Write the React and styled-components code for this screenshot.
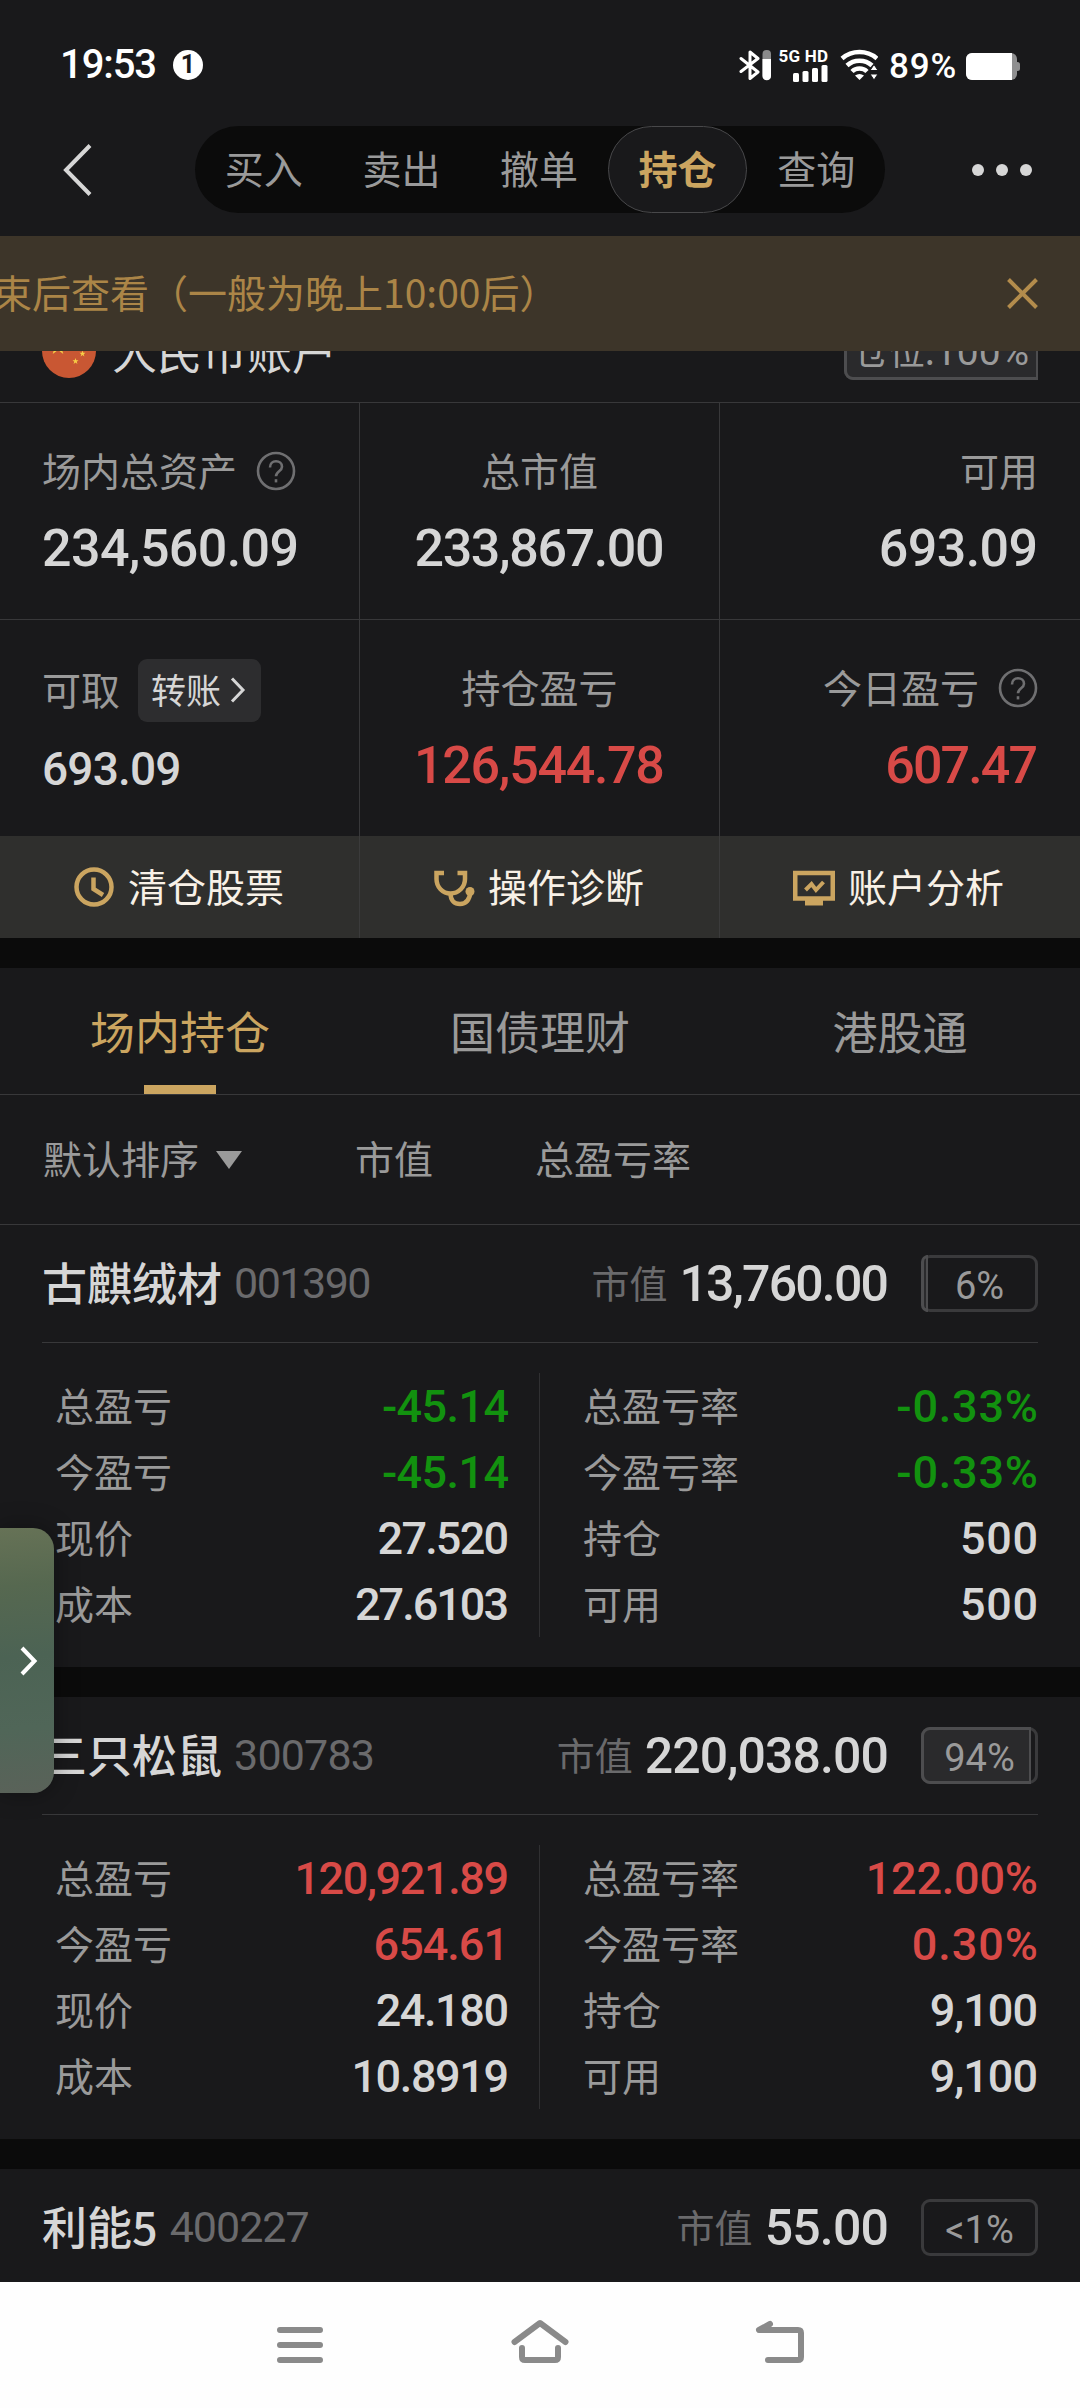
import React from "react";
import styled, { createGlobalStyle } from "styled-components";

const GlobalStyle = createGlobalStyle`
  * {
    box-sizing: border-box;
  }
  body {
    margin: 0;
    background: #19191b;
    font-family: "Noto Sans CJK SC", sans-serif;
    color: #d6d6d6;
  }
`;

const Screen = styled.div`
  width: 1080px;
  height: 2408px;
  display: flex;
  flex-direction: column;
  position: relative;
  overflow: hidden;
  background: #19191b;
`;

const Num = styled.span`
  font-family: Roboto, sans-serif;
  font-size: ${(props) => props.$size || 45}px;
  font-weight: ${(props) => props.$weight || 500};
  line-height: 1;
  letter-spacing: ${(props) => props.$track || 0}px;
  margin-right: ${(props) => -(props.$track || 0)}px;
  color: ${(props) => props.$color || "#d6d6d6"};
  white-space: nowrap;
`;

const Text = styled.span`
  padding-bottom: 4px;
  font-size: ${(props) => props.$size || 39}px;
  font-weight: ${(props) => props.$weight || 400};
  line-height: 1;
  color: ${(props) => props.$color || "#9a9a9a"};
  white-space: nowrap;
`;

const StatusBar = styled.div`
  height: 115px;
  padding: 14px 60px 0 60px;
  display: flex;
  align-items: center;
`;

const Clock = styled(Num)`
  margin-right: 17px;
`;

const NoticeDot = styled.div`
  width: 30px;
  height: 30px;
  border-radius: 50%;
  background: #fff;
  display: flex;
  justify-content: center;
  align-items: center;
`;

const StatusIcons = styled.div`
  margin-left: auto;
  display: flex;
  align-items: center;
`;

const BatteryLevel = styled(Num)`
  margin: 0 9px 0 11px;
  padding-top: 4px;
`;

const Network = styled.div`
  width: 48px;
  height: 34px;
  margin: 0 12px 0 9px;
  display: flex;
  flex-direction: column;
  justify-content: space-between;
  align-items: flex-end;
`;

const TopNav = styled.div`
  height: 121px;
  padding: 0 48px 12px 62px;
  display: flex;
  align-items: center;
  justify-content: space-between;
`;

const Pills = styled.div`
  width: 690px;
  height: 87px;
  margin-left: 14px;
  border-radius: 44px;
  background: #0b0b0b;
  display: flex;
`;

const Pill = styled.div`
  flex: 1;
  height: 87px;
  display: flex;
  justify-content: center;
  align-items: center;
  border-radius: 44px;
  ${(props) =>
    props.$active && `background: #19191b; border: 1px solid #48484a;`}
`;

const Notice = styled.div`
  height: 115px;
  padding: 0 42px 0 0;
  display: flex;
  align-items: center;
  justify-content: space-between;
  background: #3d3529;
`;

const NoticeText = styled(Text)`
  margin-left: -7px;
`;

const AccountClip = styled.div`
  height: 52px;
  overflow: hidden;
  border-bottom: 1px solid #38383a;
`;

const Account = styled.div`
  height: 102px;
  margin-top: -51px;
  padding: 0 42px;
  display: flex;
  align-items: center;
`;

const AccountName = styled(Text)`
  margin-left: 16px;
  padding-bottom: 2px;
  flex: 1;
`;

const Badge = styled.div`
  position: relative;
  width: ${(props) => props.$width || 117}px;
  height: 57px;
  display: flex;
  justify-content: center;
  align-items: center;
  border: 3px solid #3a3a3c;
  border-radius: 9px;
`;

const BadgeFill = styled.div`
  position: absolute;
  left: -3px;
  top: -3px;
  height: 57px;
  background: #2a2a2c;
  border: 3px solid #4d4d4f;
  border-right-width: 2px;
  border-radius: 9px 0 0 9px;
`;

const BadgeText = styled(Num)`
  position: relative;
  padding-top: 4px;
`;

const PositionText = styled(Text)`
  position: relative;
  padding-bottom: 0;
`;

const Summary = styled.div`
  display: grid;
  grid-template-columns: 360px 360px 360px;
  grid-template-rows: 217px 216px;
`;

const Cell = styled.div`
  padding: 42px 42px 0;
  display: flex;
  flex-direction: column;
  align-items: ${(props) => props.$align || "center"};
  border-right: ${(props) => (props.$last ? 0 : 1)}px solid #38383a;
  border-bottom: ${(props) => (props.$bottom ? 0 : 1)}px solid #38383a;
`;

const CellLabel = styled.div`
  height: 52px;
  margin-bottom: 26px;
  padding-top: ${(props) => props.$drop || 0}px;
  display: flex;
  align-items: center;
`;

const HelpIcon = styled.svg`
  width: 40px;
  height: 40px;
  margin-left: 19px;
`;

const Transfer = styled.div`
  width: 123px;
  height: 63px;
  margin-left: 18px;
  padding-left: 13px;
  display: flex;
  align-items: center;
  gap: 8px;
  border-radius: 9px;
  background: #2d2d2f;
`;

const SmallValue = styled(Num)`
  padding-top: 6px;
`;

const QuickBar = styled.div`
  height: 102px;
  display: grid;
  grid-template-columns: 360px 360px 360px;
  background: #2f2f2d;
`;

const QuickItem = styled.div`
  display: flex;
  justify-content: center;
  align-items: center;
  gap: 13px;
  padding-top: 1px;
  padding-right: ${(props) => (props.$last ? 3 : 2)}px;
  border-right: ${(props) => (props.$last ? 0 : 1)}px solid #3b3b3b;
`;

const Gap = styled.div`
  height: 30px;
  flex-shrink: 0;
  background: #0b0b0b;
`;

const Tabs = styled.div`
  height: 127px;
  display: grid;
  grid-template-columns: 1fr 1fr 1fr;
  border-bottom: 1px solid #38383a;
`;

const Tab = styled.div`
  display: flex;
  flex-direction: column;
  align-items: center;
  padding-top: 40px;
`;

const TabMark = styled.div`
  width: 72px;
  height: 9px;
  margin-top: auto;
  background: #cba560;
`;

const SortBar = styled.div`
  height: 130px;
  padding-left: 43px;
  display: flex;
  align-items: center;
  border-bottom: 1px solid #38383a;
`;

const SortItem = styled.div`
  width: ${(props) => props.$width}px;
  display: flex;
  align-items: center;
  gap: 17px;
`;

const StockHead = styled.div`
  height: 118px;
  margin: 0 42px;
  display: flex;
  align-items: center;
  border-bottom: 1px solid #38383a;
`;

const StockName = styled(Text)`
  margin-right: 12px;
`;

const Push = styled.div`
  flex: 1;
`;

const MarketValue = styled(Num)`
  margin-left: 12px;
  margin-right: ${(props) => 32 - (props.$track || 0)}px;
`;

const Details = styled.div`
  height: 264px;
  margin: 30px 42px;
  flex-shrink: 0;
  display: grid;
  grid-template-columns: 498px 498px;
`;

const Column = styled.div`
  padding: ${(props) => (props.$left ? "0 30px 0 13px" : "0 0 0 43px")};
  border-right: ${(props) => (props.$left ? 1 : 0)}px solid #303032;
`;

const Row = styled.div`
  height: 66px;
  display: flex;
  align-items: center;
  justify-content: space-between;
`;

const SidePanel = styled.div`
  position: absolute;
  left: 0;
  top: 1528px;
  width: 54px;
  height: 265px;
  padding: 1px 0 0 19px;
  display: flex;
  align-items: center;
  border-radius: 0 21px 21px 0;
  background: linear-gradient(
    175deg,
    #667256 0%,
    #566850 22%,
    #4c6354 48%,
    #506658 75%,
    #5a6259 100%
  );
  box-shadow: 0 0 24px rgba(0, 0, 0, 0.35);
`;

const SystemNav = styled.div`
  height: 126px;
  position: absolute;
  left: 0;
  right: 0;
  bottom: 0;
  padding: 0 180px;
  display: grid;
  grid-template-columns: 1fr 1fr 1fr;
  justify-items: center;
  background: #fefefe;
`;

const NavIcon = styled.svg`
  width: 72px;
  height: 126px;
  fill: none;
  stroke: #8a8a8a;
  stroke-width: 6;
  stroke-linecap: round;
  stroke-linejoin: round;
`;

const RED = "#d84a47";
const GREEN = "#12920f";
const WHITE = "#d6d6d6";

// rows: label, value, colour, letter spacing
const stocks = [
  {
    name: "古麒绒材",
    code: "001390",
    codeTrack: -1.5,
    value: "13,760.00",
    valueTrack: -1.8,
    ratio: 6,
    left: [
      ["总盈亏", "-45.14", GREEN, -0.6],
      ["今盈亏", "-45.14", GREEN, -0.6],
      ["现价", "27.520", WHITE, -1.8],
      ["成本", "27.6103", WHITE, -2],
    ],
    right: [
      ["总盈亏率", "-0.33%", GREEN, 0.8],
      ["今盈亏率", "-0.33%", GREEN, 0.8],
      ["持仓", "500", WHITE, 0.6],
      ["可用", "500", WHITE, 0.6],
    ],
  },
  {
    name: "三只松鼠",
    code: "300783",
    codeTrack: -0.8,
    value: "220,038.00",
    valueTrack: -0.9,
    ratio: 94,
    left: [
      ["总盈亏", "120,921.89", RED, -1.4],
      ["今盈亏", "654.61", RED, -1],
      ["现价", "24.180", WHITE, -1.4],
      ["成本", "10.8919", WHITE, -1.4],
    ],
    right: [
      ["总盈亏率", "122.00%", RED, -0.2],
      ["今盈亏率", "0.30%", RED, 1],
      ["持仓", "9,100", WHITE, -1],
      ["可用", "9,100", WHITE, -1],
    ],
  },
  {
    name: "利能5",
    code: "400227",
    codeTrack: -1,
    value: "55.00",
    valueTrack: -0.8,
    ratio: 0,
  },
];

function Help() {
  return (
    <HelpIcon viewBox="0 0 40 40" fill="none" stroke="#6f6f71" strokeWidth="2.6">
      <circle cx="20" cy="20" r="18" />
      <path d="M14 16.5c0-4 2.6-6.2 6-6.2s6 2.2 6 5.4c0 4.6-6 4.6-6 9.6" />
      <path d="M20 28.2v3.2" />
    </HelpIcon>
  );
}

function Ratio({ value }) {
  return (
    <Badge>
      {value > 0 && <BadgeFill style={{ width: `${(value * 117) / 100}px` }} />}
      <BadgeText $size={38} $weight={400} $color="#9a9a9a">
        {value > 0 ? `${value}%` : "<1%"}
      </BadgeText>
    </Badge>
  );
}

function Stock({ stock }) {
  return (
    <>
      <StockHead>
        <StockName $size={45} $weight={500} $color="#d6d6d6">
          {stock.name}
        </StockName>
        <Num $size={43} $weight={400} $color="#6a6a6c" $track={stock.codeTrack}>
          {stock.code}
        </Num>
        <Push />
        <Text $size={38} $color="#6a6a6c">
          市值
        </Text>
        <MarketValue $size={50} $track={stock.valueTrack}>
          {stock.value}
        </MarketValue>
        <Ratio value={stock.ratio} />
      </StockHead>
      {stock.left && (
        <Details>
          {[stock.left, stock.right].map((rows, i) => (
            <Column key={i} $left={i === 0}>
              {rows.map(([label, value, color, track]) => (
                <Row key={label}>
                  <Text>{label}</Text>
                  <Num $color={color} $track={track}>
                    {value}
                  </Num>
                </Row>
              ))}
            </Column>
          ))}
        </Details>
      )}
    </>
  );
}

function Status() {
  return (
    <StatusBar>
      <Clock $size={40} $color="#fff" $track={-1.1}>
        19:53
      </Clock>
      <NoticeDot>
        <Num $size={25} $weight={700} $color="#19191b">
          1
        </Num>
      </NoticeDot>
      <StatusIcons>
        <svg width="32" height="32" viewBox="0 0 32 32" fill="none">
          <path
            d="M2 9.5L19 23l-8 6.500V3l8 6.500L2 22.500"
            stroke="#fff"
            strokeWidth="3"
            strokeLinejoin="round"
            strokeLinecap="round"
          />
          <rect x="23.500" y="1" width="8.500" height="30" rx="4" fill="#8a8a8b" />
          <path d="M23.500 10H32v17a4.250 4.250 0 0 1-8.500 0z" fill="#fff" />
        </svg>
        <Network>
          <Num $size={17} $weight={700} $color="#fff" $track={0.2}>
            5G HD
          </Num>
          <svg width="36" height="17" viewBox="0 0 36 17" fill="#fff">
            <rect x="1" y="8" width="6" height="9" rx="1.500" />
            <rect x="10.500" y="6" width="6" height="11" rx="1.500" />
            <rect x="20" y="3" width="6" height="14" rx="1.500" />
            <rect x="29.500" y="0" width="6" height="17" rx="1.500" />
          </svg>
        </Network>
        <svg width="38" height="32" viewBox="0 0 38 32" fill="none" stroke="#fff">
          <path d="M2 9.500C12 .8 27 .8 37 9.500" strokeWidth="4.500" />
          <path d="M7 16.500C14 10 25 10 32 16.500" strokeWidth="4.500" />
          <path d="M12 22.500C16 18.500 23 18.500 27 22.500" strokeWidth="4.500" />
          <path d="M15 26.500q4.500-3 9 0L19.500 31z" fill="#fff" stroke="none" />
          <path
            d="M34 15.500l4 6h-8zM34 31l4-6h-8z"
            fill="#fff"
            stroke="#19191b"
            strokeWidth="1"
          />
        </svg>
        <BatteryLevel $size={35} $color="#fff" $track={0.8}>
          89%
        </BatteryLevel>
        <svg width="54" height="32" viewBox="0 0 54 32">
          <rect x="0" y="4" width="51" height="27" rx="6" fill="#8f8f90" />
          <rect x="49" y="13" width="5" height="9" rx="2.500" fill="#8f8f90" />
          <path d="M6 4h40v27H6a6 6 0 0 1-6-6V10a6 6 0 0 1 6-6z" fill="#fff" />
        </svg>
      </StatusIcons>
    </StatusBar>
  );
}

function App() {
  return (
    <Screen>
      <GlobalStyle />
      <Status />

      <TopNav>
        <svg width="32" height="54" viewBox="0 0 32 54" fill="none">
          <path d="M28 2.500L4 27l24 24.500" stroke="#d6d6d6" strokeWidth="4" />
        </svg>
        <Pills>
          {["买入", "卖出", "撤单", "持仓", "查询"].map((label) => (
            <Pill key={label} $active={label === "持仓"}>
              <Text
                $weight={label === "持仓" ? 700 : 400}
                $color={label === "持仓" ? "#cba560" : "#9a9a9a"}
              >
                {label}
              </Text>
            </Pill>
          ))}
        </Pills>
        <svg width="60" height="12" viewBox="0 0 60 12" fill="#d6d6d6">
          <circle cx="6" cy="6" r="6" />
          <circle cx="30" cy="6" r="6" />
          <circle cx="54" cy="6" r="6" />
        </svg>
      </TopNav>

      <Notice>
        <NoticeText $color="#ab8547">束后查看（一般为晚上10:00后）</NoticeText>
        <svg width="31" height="31" viewBox="0 0 31 31">
          <path d="M1.500 1.500l28 28M29.500 1.500l-28 28" stroke="#b38c4c" strokeWidth="4" />
        </svg>
      </Notice>

      <AccountClip>
        <Account>
          <svg width="54" height="54" viewBox="0 0 54 54">
            <circle cx="27" cy="27" r="27" fill="#c95733" />
            <g fill="#f7ce46">
              <path d="M16 13l2.200 6.300h6.300l-5.200 4 2 6.700-5.300-4-5.300 4 2-6.700-5.200-4h6.300z" />
              <path d="M40.500 26.500l.8 2.200h2.200l-1.800 1.500.7 2.300-1.900-1.400-1.900 1.400.7-2.300-1.800-1.500h2.200z" />
              <path d="M33.500 34l.8 2.200h2.200l-1.800 1.500.7 2.300-1.900-1.400-1.900 1.400.7-2.300-1.800-1.500h2.200z" />
            </g>
          </svg>
          <AccountName $size={45} $color="#d6d6d6">
            人民币账户
          </AccountName>
          <Badge $width={194}>
            <BadgeFill style={{ width: "194px" }} />
            <PositionText $size={36}>
              仓位:
              <Num $size={39} $weight={400} $color="#9a9a9a">
                100%
              </Num>
            </PositionText>
          </Badge>
        </Account>
      </AccountClip>

      <Summary>
        <Cell $align="flex-start">
          <CellLabel>
            <Text>场内总资产</Text>
            <Help />
          </CellLabel>
          <Num $size={52} $track={-0.6}>
            234,560.09
          </Num>
        </Cell>
        <Cell>
          <CellLabel>
            <Text>总市值</Text>
          </CellLabel>
          <Num $size={52} $track={-1.4}>
            233,867.00
          </Num>
        </Cell>
        <Cell $align="flex-end" $last>
          <CellLabel>
            <Text>可用</Text>
          </CellLabel>
          <Num $size={52} $track={-0.6}>
            693.09
          </Num>
        </Cell>
        <Cell $align="flex-start" $bottom>
          <CellLabel $drop={4}>
            <Text>可取</Text>
            <Transfer>
              <Text $size={35} $color="#d6d6d6">
                转账
              </Text>
              <svg width="17" height="26" viewBox="0 0 17 26" fill="none">
                <path d="M3 1.500L14 13 3 24.500" stroke="#d6d6d6" strokeWidth="3" />
              </svg>
            </Transfer>
          </CellLabel>
          <SmallValue $size={46} $track={-0.8}>
            693.09
          </SmallValue>
        </Cell>
        <Cell $bottom>
          <CellLabel>
            <Text>持仓盈亏</Text>
          </CellLabel>
          <Num $size={52} $color={RED} $track={-1.3}>
            126,544.78
          </Num>
        </Cell>
        <Cell $align="flex-end" $last $bottom>
          <CellLabel>
            <Text>今日盈亏</Text>
            <Help />
          </CellLabel>
          <Num $size={52} $color={RED} $track={-1.9}>
            607.47
          </Num>
        </Cell>
      </Summary>

      <QuickBar>
        <QuickItem>
          <svg width="42" height="42" viewBox="0 0 42 42" fill="none" stroke="#cba560">
            <circle cx="21" cy="20" r="17.500" strokeWidth="4.500" />
            <path d="M20.500 10.500V22l9.500 6" strokeWidth="4.500" />
          </svg>
          <Text $color="#f8f1e7">清仓股票</Text>
        </QuickItem>
        <QuickItem>
          <svg width="42" height="42" viewBox="0 0 42 42" fill="none" stroke="#cba560">
            <path d="M11 6H3.500V12c0 8 6 14.500 14 14.500S32 20 32 12V6h-7.500" strokeWidth="4.500" />
            <path d="M17.500 26.500c0 7 4 10.500 9.500 10.500s9.500-4 10.500-12" strokeWidth="4.500" />
            <circle cx="37" cy="24.500" r="4.500" fill="#cba560" stroke="none" />
          </svg>
          <Text $color="#f8f1e7">操作诊断</Text>
        </QuickItem>
        <QuickItem $last>
          <svg width="42" height="42" viewBox="0 0 42 42" fill="none" stroke="#cba560">
            <rect x="2.250" y="6" width="37.500" height="25.500" strokeWidth="4.500" />
            <path d="M12 32h18v6.500H12z" fill="#cba560" stroke="none" />
            <path d="M12.500 23l6-6 4.500 6 7.500-8" strokeWidth="4" />
          </svg>
          <Text $color="#f8f1e7">账户分析</Text>
        </QuickItem>
      </QuickBar>

      <Gap />

      <Tabs>
        <Tab>
          <Text $size={45} $color="#cba560">
            场内持仓
          </Text>
          <TabMark />
        </Tab>
        <Tab>
          <Text $size={45}>国债理财</Text>
        </Tab>
        <Tab>
          <Text $size={45}>港股通</Text>
        </Tab>
      </Tabs>

      <SortBar>
        <SortItem $width={312}>
          <Text>默认排序</Text>
          <svg width="26" height="18" viewBox="0 0 26 18">
            <path d="M0 0h26L13 18z" fill="#9a9a9a" />
          </svg>
        </SortItem>
        <SortItem $width={180}>
          <Text>市值</Text>
        </SortItem>
        <SortItem>
          <Text>总盈亏率</Text>
        </SortItem>
      </SortBar>

      <Stock stock={stocks[0]} />
      <Gap />
      <Stock stock={stocks[1]} />
      <Gap />
      <Stock stock={stocks[2]} />

      <SidePanel>
        <svg width="20" height="32" viewBox="0 0 20 32" fill="none">
          <path d="M3 3l12.500 13L3 29" stroke="#fff" strokeWidth="4" />
        </svg>
      </SidePanel>

      <SystemNav>
        <NavIcon viewBox="0 0 72 126">
          <path d="M16 48h40M16 63h40M16 78h40" />
        </NavIcon>
        <NavIcon viewBox="0 0 72 126">
          <path d="M10.500 60L36 41l25.500 19M18 66v9q0 3 3 3h30q3 0 3-3v-9" />
        </NavIcon>
        <NavIcon viewBox="0 0 72 126">
          <path d="M26 42l-11 6h39q3 0 3 3v24q0 3-3 3H24" />
        </NavIcon>
      </SystemNav>
    </Screen>
  );
}

export default App;
